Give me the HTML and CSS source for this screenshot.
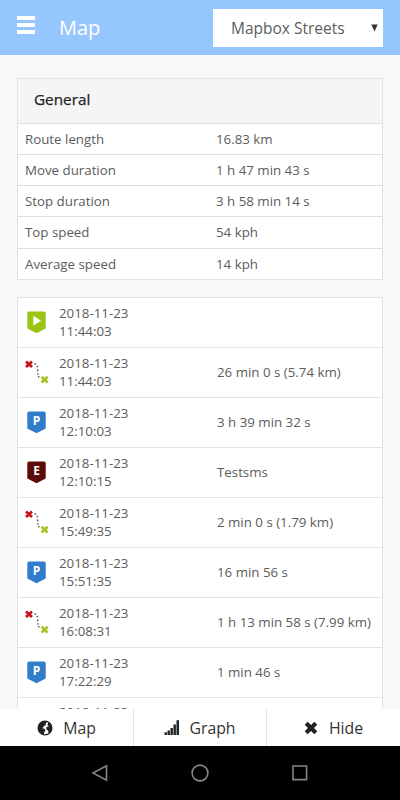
FILE: index.html
```html
<!DOCTYPE html>
<html lang="en">
<head>
  <meta charset="UTF-8">
  <meta name="viewport" content="width=device-width, initial-scale=1.0">
  <title>Map</title>
  <link rel="stylesheet" href="styles.css">
</head>
<body>
    <!-- shared list icons -->
    <svg class="sprite" width="0" height="0">
        <symbol id="badge" viewBox="0 0 19 23">
            <path d="M2 0.5h15a1.7 1.7 0 0 1 1.7 1.7v15.3L9.5 22.3L0.3 17.5V2.2A1.7 1.7 0 0 1 2 0.5z" fill="currentColor"/>
        </symbol>
        <symbol id="route" viewBox="0 0 24 24">
            <path d="M1 1.4l6 5.6M7 1.4L1 7" stroke="#c4161c" stroke-width="2.8"/>
            <path d="M16.6 16.8l6 5.6M22.6 16.8l-6 5.6" stroke="#a3c626" stroke-width="2.8"/>
            <path d="M9.5 3.8Q12.5 4.5 12.6 9T13.4 16L15 19" fill="none" stroke="#555" stroke-width="1.5" stroke-dasharray="1.5 1.9"/>
        </symbol>
    </svg>

    <div class="app">
        <header class="topbar">
            <button class="menu-button" aria-label="Menu"><span></span><span></span><span></span></button>
            <h1>Map</h1>
            <div class="layer-select">
                <span>Mapbox Streets</span>
                <svg width="7" height="8" viewBox="0 0 7 8"><path d="M0.3 0.6h6.4L3.5 7.4z" fill="#333"/></svg>
            </div>
        </header>

        <main class="content">
            <section class="panel general">
                <h2>General</h2>
                <div class="stat"><span>Route length</span><span>16.83 km</span></div>
                <div class="stat"><span>Move duration</span><span>1 h 47 min 43 s</span></div>
                <div class="stat"><span>Stop duration</span><span>3 h 58 min 14 s</span></div>
                <div class="stat"><span>Top speed</span><span>54 kph</span></div>
                <div class="stat"><span>Average speed</span><span>14 kph</span></div>
            </section>

            <section class="panel events">
                <div class="event">
                    <svg class="badge start" viewBox="0 0 19 23"><use href="#badge"/><path d="M6.3 4.8v9.8L14 9.7z" fill="#fff"/></svg>
                    <div class="time">2018-11-23<br>11:44:03</div>
                    <div class="info"></div>
                </div>
                <div class="event">
                    <svg class="route"><use href="#route"/></svg>
                    <div class="time">2018-11-23<br>11:44:03</div>
                    <div class="info">26 min 0 s (5.74 km)</div>
                </div>
                <div class="event">
                    <svg class="badge parking" viewBox="0 0 19 23"><use href="#badge"/><text x="9.6" y="14.2">P</text></svg>
                    <div class="time">2018-11-23<br>12:10:03</div>
                    <div class="info">3 h 39 min 32 s</div>
                </div>
                <div class="event">
                    <svg class="badge alert" viewBox="0 0 19 23"><use href="#badge"/><text x="9.6" y="14.2">E</text></svg>
                    <div class="time">2018-11-23<br>12:10:15</div>
                    <div class="info">Testsms</div>
                </div>
                <div class="event">
                    <svg class="route"><use href="#route"/></svg>
                    <div class="time">2018-11-23<br>15:49:35</div>
                    <div class="info">2 min 0 s (1.79 km)</div>
                </div>
                <div class="event">
                    <svg class="badge parking" viewBox="0 0 19 23"><use href="#badge"/><text x="9.6" y="14.2">P</text></svg>
                    <div class="time">2018-11-23<br>15:51:35</div>
                    <div class="info">16 min 56 s</div>
                </div>
                <div class="event">
                    <svg class="route"><use href="#route"/></svg>
                    <div class="time">2018-11-23<br>16:08:31</div>
                    <div class="info">1 h 13 min 58 s (7.99 km)</div>
                </div>
                <div class="event">
                    <svg class="badge parking" viewBox="0 0 19 23"><use href="#badge"/><text x="9.6" y="14.2">P</text></svg>
                    <div class="time">2018-11-23<br>17:22:29</div>
                    <div class="info">1 min 46 s</div>
                </div>
                <div class="event">
                    <div></div>
                    <div class="time">2018-11-23</div>
                    <div class="info"></div>
                </div>
            </section>
        </main>

        <footer class="tabs">
            <button class="tab">
                <svg width="16" height="16" viewBox="0 0 16 16">
                    <circle cx="8" cy="8" r="6.9" fill="#fff" stroke="#222" stroke-width="1.3"/>
                    <path d="M1.2 7.5C1.4 3.6 4.6 0.9 8.3 1.1L10 2.3L8.6 3.6L9 5L7.2 5.8L6.2 7.4L5 7.9L7.4 8.8L8.6 10.2L7.3 12L6.7 14.6C3.2 13.6 1.1 11 1.2 7.5z" fill="#222"/>
                    <path d="M11.2 2.8L13.2 3.3L14.8 6.5L14.9 9L13.4 12.2L11.6 13.2L11.1 10.6L9.5 9.6L9.2 7.6L10.9 6.4L12.3 6.7L10.4 5.3z" fill="#222"/>
                </svg>
                <span>Map</span>
            </button>
            <button class="tab graph">
                <svg width="16" height="16" viewBox="0 0 16 16" fill="#222">
                    <path d="M0.5 12.3h2.4V15H0.5zM3.5 10.6h2.4V15H3.5zM6.5 8h2.4v7H6.5zM9.5 4.5h2.4V15H9.5zM12.5 0.3H15V15h-2.5z"/>
                </svg>
                <span>Graph</span>
            </button>
            <button class="tab hide">
                <svg width="14" height="14" viewBox="0 0 14 14">
                    <path d="M2.2 2.2l9.6 9.6M11.8 2.2l-9.6 9.6" stroke="#222" stroke-width="4.2"/>
                </svg>
                <span>Hide</span>
            </button>
        </footer>

        <nav class="system-nav">
            <svg width="18" height="18" viewBox="0 0 18 18"><path d="M15.5 1.8v14.4L2 9z"/></svg>
            <svg width="18" height="18" viewBox="0 0 18 18"><circle cx="9" cy="9" r="7.9"/></svg>
            <svg width="18" height="18" viewBox="0 0 18 18"><path d="M2 2h13.6v13.6H2z"/></svg>
        </nav>
    </div>
</body>
</html>
```

FILE: styles.css
```css
* {
    box-sizing: border-box;
}
body {
    margin: 0;
    font-family: "Open Sans", sans-serif;
    font-size: 13.3px;
    color: #5c5c5c;
    background-color: #f8f8f8;
}
button {
    padding: 0;
    border: 0;
    background: none;
    font-family: inherit;
}
.sprite {
    display: none;
}
.app {
    display: flex;
    flex-direction: column;
    width: 400px;
    height: 800px;
    overflow: hidden;
}

/* top bar */
.topbar {
    display: flex;
    flex: none;
    align-items: center;
    height: 55px;
    padding: 0 17px;
    background-color: #96c6fe;
}
.menu-button {
    display: flex;
    flex-direction: column;
    gap: 3px;
    width: 18px;
    margin-top: -5px;
}
.menu-button span {
    height: 4px;
    background-color: #fff;
}
.topbar h1 {
    margin: 0 0 0 24px;
    font-size: 20px;
    font-weight: 400;
    line-height: 26px;
    color: #fff;
}
.layer-select {
    display: flex;
    align-items: center;
    justify-content: space-between;
    width: 170px;
    height: 38px;
    margin-left: auto;
    padding: 0 5px 0 18px;
    background-color: #fff;
    font-size: 15.5px;
}

/* scrolling part */
.content {
    flex: 1;
    min-height: 0;
    padding: 23px 17px 0;
    overflow: hidden;
}
.panel {
    border: 1px solid #e2e2e2;
    background-color: #fff;
}
.general {
    margin-bottom: 17px;
}
.general h2 {
    height: 44px;
    margin: 0;
    padding-left: 16px;
    background-color: #f5f5f5;
    font-size: 15.3px;
    line-height: 41px;
    font-weight: 400;
    color: #222;
    -webkit-text-stroke: 0.25px #222;
}
.stat {
    display: grid;
    grid-template-columns: 191px 1fr;
    align-items: center;
    height: 31.15px;
    padding-left: 7px;
    border-top: 1px solid #dedede;
}
.event {
    display: grid;
    grid-template-columns: 34px 158px 1fr;
    align-items: center;
    height: 50px;
    padding-left: 7px;
    border-bottom: 1px solid #e2e2e2;
}
.time {
    line-height: 18.7px;
}
.event:last-child {
    align-items: start;
    padding-top: 5px;
}
.badge {
    width: 19px;
    height: 23px;
    margin-left: 2px;
}
.badge text {
    fill: #fff;
    font-size: 12px;
    font-weight: 700;
    text-anchor: middle;
}
.start {
    color: #9cc414;
}
.parking {
    color: #2f7dcb;
}
.alert {
    color: #5c0b08;
}
.route {
    width: 24px;
    height: 24px;
}

/* bottom tabs */
.tabs {
    display: grid;
    grid-template-columns: 133px 133px 1fr;
    flex: none;
    height: 37px;
    background-color: #fff;
}
.tab {
    display: flex;
    align-items: center;
    justify-content: center;
    gap: 10px;
    font-size: 15.8px;
    color: #333;
}
.tab + .tab {
    border-left: 1px solid #e2e2e2;
}
.graph {
    gap: 9px;
}
.hide {
    gap: 11px;
}

.system-nav {
    display: flex;
    flex: none;
    align-items: center;
    justify-content: center;
    gap: 82px;
    height: 54px;
    background-color: #000;
    fill: none;
    stroke: #858585;
    stroke-width: 1.6;
}
```
